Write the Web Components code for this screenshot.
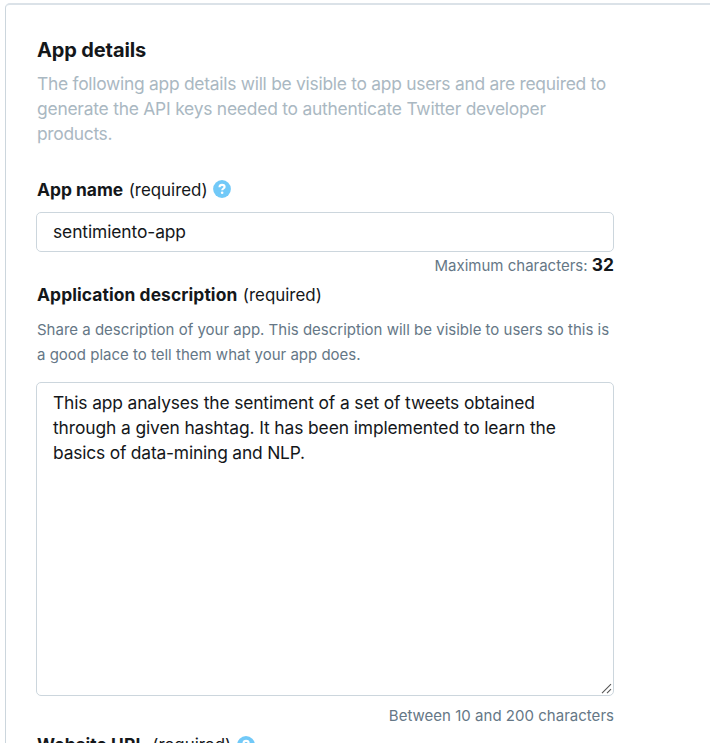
<!DOCTYPE html>
<html lang="en">
<head>
<meta charset="utf-8">
<title>App details</title>
<style>
html,body{margin:0;height:100%;overflow:hidden;background:#fff}
body{font-family:Inter,"Liberation Sans",sans-serif;font-size:17.4px;line-height:25px;color:#14171a}
</style>
</head>
<body>
<app-panel>
  <panel-heading>
    <span slot="title">App details</span>
    <text-line style="--ls:-.26px">The following app details will be visible to app users and are required to</text-line>
    <text-line style="--ls:-.213px">generate the API keys needed to authenticate Twitter developer</text-line>
    <text-line style="--ls:-.3px">products.</text-line>
  </panel-heading>
  <field-label style="margin-top:31px" help>App name</field-label>
  <text-box style="margin-top:10px"><text-line style="--ls:-.096px">sentimiento-app</text-line></text-box>
  <field-hint>Maximum characters: <hint-count slot="count">32</hint-count></field-hint>
  <field-label style="margin-top:5px;--ls:.09px" >Application description</field-label>
  <field-help>
    <text-line>Share a description of your app. This description will be visible to users so this is</text-line>
    <text-line>a good place to tell them what your app does.</text-line>
  </field-help>
  <text-box multiline style="margin-top:15px">
    <text-line style="--ls:-.13px">This app analyses the sentiment of a set of tweets obtained</text-line>
    <text-line style="--ls:-.101px">through a given hashtag. It has been implemented to learn the</text-line>
    <text-line style="--ls:-.188px">basics of data-mining and NLP.</text-line>
  </text-box>
  <field-hint style="margin-top:7px;--ls:.02px">Between 10 and 200 characters</field-hint>
  <field-label style="margin-top:4px;--ls:.06px;--gap:7px;--icon-top:4px;--icon-gap:6px" help>Website URL</field-label>
</app-panel>
<script>
const define=(name,html)=>customElements.define(name,class extends HTMLElement{
  constructor(){super();this.attachShadow({mode:'open'}).innerHTML=html;}
});
define('text-line',`<style>:host{display:block;white-space:nowrap;letter-spacing:var(--ls,0)}</style><slot></slot>`);
define('app-panel',`<style>
:host{display:flex;flex-direction:column;box-sizing:border-box;height:740px;overflow:hidden;margin:3px 0 0 5px;padding:33px 96px 0 31px;
border:0 solid #ccd6dd;border-top:2px solid #dbe2e8;border-left:1px solid #ccd6dd;border-radius:5px 0 0 0}
</style><slot></slot>`);
define('panel-heading',`<style>
:host{display:flex;flex-direction:column;gap:8px;color:#aab8c2}
h2{margin:0;font-size:20px;line-height:25px;font-weight:700;letter-spacing:-.13px;color:#14171a}
</style><h2><slot name="title"></slot></h2><div><slot></slot></div>`);
define('help-icon',`<style>:host{display:block;width:18px;height:18px}svg{display:block}</style>
<svg width="18" height="18" viewBox="0 0 18 18"><circle cx="9" cy="9" r="8.9" fill="#71c9f8"/>
<path d="M6.5 7.2C6.6 5.6 7.6 4.9 9.1 4.9c1.5 0 2.5.8 2.5 2 0 1.6-2.4 1.6-2.4 3.4" fill="none" stroke="#fff" stroke-width="2.1"/><circle cx="9.15" cy="12.8" r="1.3" fill="#fff"/></svg>`);
define('field-label',`<style>
:host{display:flex;align-items:baseline;height:25px;flex:none;white-space:nowrap}
b{font-weight:700;letter-spacing:var(--ls,0)}
span{font-size:16.9px;margin-left:var(--gap,5.5px)}
help-icon{display:none;margin:var(--icon-top,3px) 0 0 var(--icon-gap,5.5px);align-self:flex-start}
:host([help]) help-icon{display:block}
</style><b><slot></slot></b><span>(required)</span><help-icon></help-icon>`);
define('text-box',`<style>
:host{display:block;flex:none;position:relative;box-sizing:border-box;height:40px;margin-left:-1px;padding:6px 16px;border:1px solid #ccd6dd;border-radius:5px;background:#fff}
:host([multiline]){height:314px;padding-top:7px}
svg{display:none;position:absolute;right:1px;bottom:1px}
:host([multiline]) svg{display:block}
</style><slot></slot><svg width="11" height="11" viewBox="0 0 11 11"><path d="M1 10.2 10 1.2M6 10.2 10 6.2" stroke="#555" stroke-width="1.1" fill="none"/></svg>`);
define('field-hint',`<style>:host{display:block;flex:none;height:25px;text-align:right;font-size:15px;letter-spacing:var(--ls,0);color:#657786;white-space:nowrap}</style><slot></slot><slot name="count"></slot>`);
define('hint-count',`<style>:host{display:inline;font-size:17.4px;font-weight:700;color:#14171a}</style><slot></slot>`);
define('field-help',`<style>:host{display:block;margin-top:10px;font-size:15px;color:#657786}</style><slot></slot>`);
</script>
</body>
</html>
